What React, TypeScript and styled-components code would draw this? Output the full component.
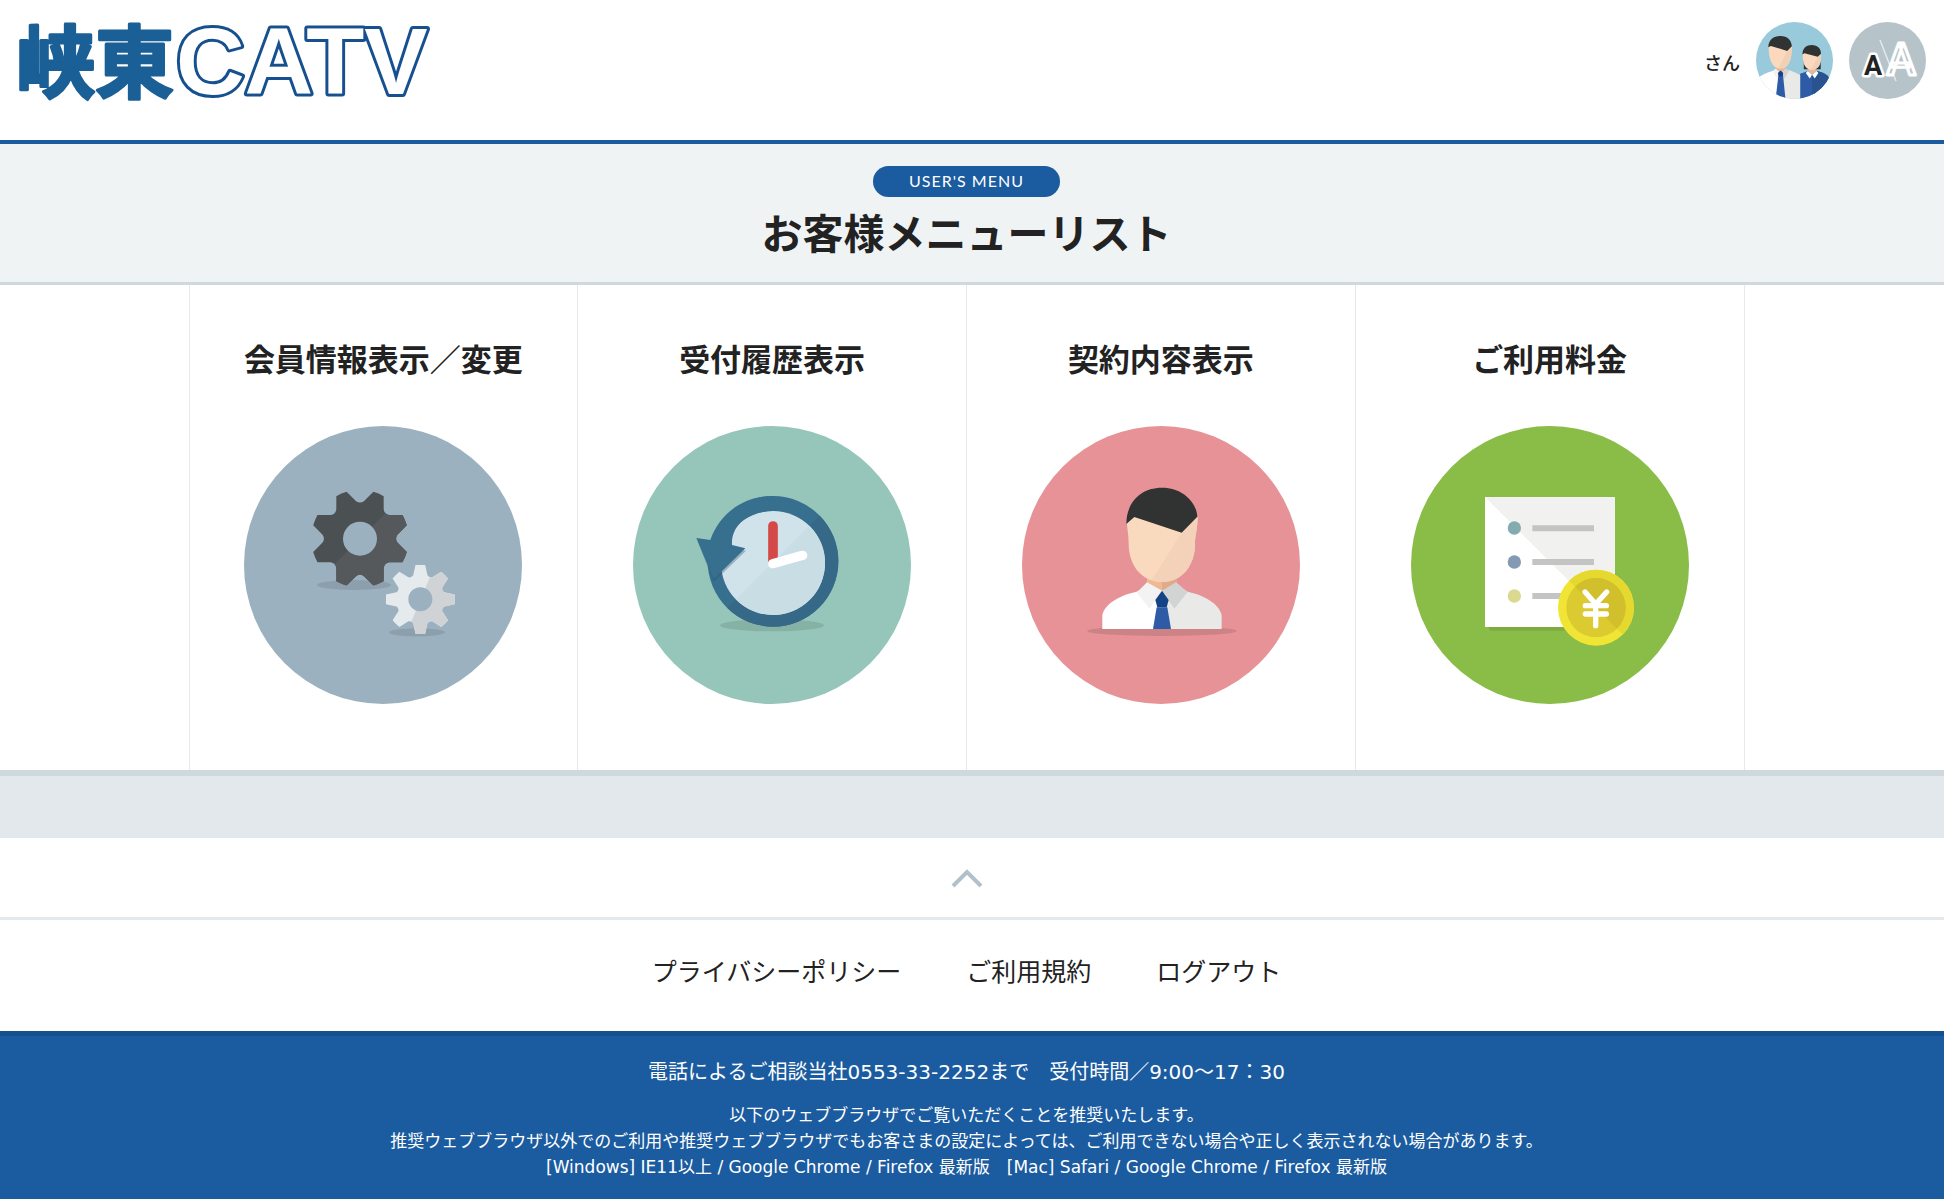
import React from "react";
import styled, { createGlobalStyle } from "styled-components";

const BLUE = "#1b5b9f";

const GlobalStyle = createGlobalStyle`
  *, *::before, *::after { box-sizing: border-box; }
  body {
    margin: 0;
    background: #fff;
    color: #222;
    font-family: "DejaVu Sans", "Noto Sans CJK JP", sans-serif;
  }
  h1, h2, p { margin: 0; }
  a { color: inherit; text-decoration: none; }
`;

const Header = styled.header`
  display: flex;
  justify-content: space-between;
  align-items: flex-start;
  height: 144px;
  padding: 0 18px 0 14px;
  border-bottom: 4px solid ${BLUE};
`;

const HomeLink = styled.a`
  display: block;
  line-height: 0;
`;

const HeaderTools = styled.div`
  display: flex;
  align-items: center;
  gap: 16px;
  padding-top: 22px;
`;

const UserName = styled.span`
  padding-top: 2px;
  font-size: 18px;
  line-height: 24px;
  font-weight: 500;
  font-family: "Noto Sans CJK JP", sans-serif;
`;

const RoundButton = styled.button`
  width: 77px;
  height: 77px;
  padding: 0;
  border: 0;
  border-radius: 50%;
  background: none;
  cursor: pointer;

  svg { display: block; width: 100%; height: 100%; }
`;

const Hero = styled.section`
  display: flex;
  flex-direction: column;
  align-items: center;
  gap: 10px;
  padding: 22px 11px 26px 0;
  background: #eff3f4;
  border-bottom: 3px solid #cfd8dd;
`;

const Pill = styled.p`
  padding: 0 36px 2px;
  border-radius: 16px;
  background: ${BLUE};
  color: #fff;
  font-family: Lato, sans-serif;
  font-size: 16px;
  line-height: 29px;
  letter-spacing: 1px;
`;

const Title = styled.h1`
  font-family: "Noto Sans CJK JP", sans-serif;
  font-size: 41px;
  line-height: 49px;
  font-weight: 700;
`;

const MenuSection = styled.main`
  padding-right: 11px;
  border-bottom: 6px solid #cfd8dd;
`;

const MenuGrid = styled.nav`
  display: grid;
  grid-template-columns: repeat(4, 1fr);
  max-width: 1556px;
  margin: 0 auto;
  border-right: 1px solid #e3e9ed;
`;

const MenuCard = styled.a`
  display: flex;
  flex-direction: column;
  align-items: center;
  gap: 44px;
  padding: 49px 20px 66px;
  border-left: 1px solid #e3e9ed;

  svg { display: block; width: 278px; height: 278px; }
`;

const CardTitle = styled.h2`
  font-family: "Noto Sans CJK JP", sans-serif;
  font-size: 31px;
  line-height: 48px;
  font-weight: 700;
  white-space: nowrap;
`;

const Band = styled.div`
  height: 62px;
  background: #e3e8ec;
`;

const PageTop = styled.a`
  display: flex;
  justify-content: center;
  align-items: center;
  height: 82px;
  padding-right: 11px;
  border-bottom: 3px solid #e3e9ed;
`;

const FooterNav = styled.nav`
  display: flex;
  justify-content: center;
  gap: 65px;
  padding: 32px 11px 38px 0;
  font-size: 25px;
  line-height: 41px;
`;

const Footer = styled.footer`
  display: flex;
  flex-direction: column;
  gap: 17px;
  padding: 23px 11px 19px 0;
  border-top: 5px solid #16518f;
  background: ${BLUE};
  color: #fff;
  text-align: center;
`;

const Phone = styled.p`
  font-size: 20px;
  line-height: 26px;
`;

const Browsers = styled.p`
  font-size: 17px;
  line-height: 26px;
`;

const LogoLatin = styled.text`
  font-family: "Liberation Sans", sans-serif;
  font-size: 95px;
  font-weight: 700;
  fill: #fff;
  stroke: #17508f;
  stroke-width: 6px;
  stroke-linejoin: round;
  paint-order: stroke;
`;

const LogoKanji = styled.text`
  font-family: "Noto Sans CJK JP", sans-serif;
  font-size: 79px;
  font-weight: 700;
  fill: #1a6097;
  stroke: #1a6097;
  stroke-width: 3px;
  stroke-linejoin: round;
`;

const Logo = () => (
  <svg width="430" height="130" viewBox="0 0 430 130" role="img" aria-label="峡東CATV">
    <LogoKanji x="2" y="92">峡東</LogoKanji>
    <LogoLatin x="162" y="94">CATV</LogoLatin>
  </svg>
);

const AvatarIcon = () => (
  <svg viewBox="228 66 232 232" aria-hidden="true">
    <clipPath id="avatarClip"><circle cx="344" cy="182" r="116" /></clipPath>
    <g clipPath="url(#avatarClip)">
      <rect x="228" y="66" width="232" height="232" fill="#98cadb" />
      <path d="M372 172v36h16v-36zM406 172v36h17v-36z" fill="#303332" />
      <path d="M386 200h22v20h-22z" fill="#ebb78f" />
      <path d="M361 222Q372 219 384 214L397 226L412 214Q440 220 448 234V300H361z" fill="#2d5ba5" />
      <path d="M397 226L412 214Q440 220 448 234V300H397z" fill="#29528f" />
      <path d="M384 214L397 225L390 236L378 220zM411 214L397 225L405 236L416 220z" fill="#fff" />
      <path d="M369 158C368 190 374 210 396 210C420 210 425 190 424 158z" fill="#fad9be" />
      <path d="M424 160C425 190 420 210 394 209L414 172z" fill="#f2d0b5" />
      <path d="M368 164C368 144 380 135 396 135C414 135 424 146 424 162L414 171L374 160z" fill="#303332" />
      <path d="M289 196h27v20h-27z" fill="#ebb78f" />
      <path d="M228 240Q245 222 280 213L302 222V300H228z" fill="#fff" />
      <path d="M302 222L318 208Q345 216 361 226V300H302z" fill="#e9e9e8" />
      <path d="M288 206L302 222L291 238L278 214z" fill="#f3f3f3" />
      <path d="M316 206L302 222L313 238L328 214z" fill="#d2d3d2" />
      <path d="M302 213L309 222L317 300H287L296 222z" fill="#2d5ba5" />
      <path d="M302 212L310 220L307 230H297L294 220z" fill="#134285" />
      <path d="M266 138C266 178 276 206 302 206C328 206 336 178 336 138z" fill="#fad9be" />
      <path d="M336 140C336 178 328 206 296 205L322 152z" fill="#f2d0b5" />
      <path d="M265 142C266 118 282 108 302 108C322 108 335 120 336 139L322 153L273 138z" fill="#303332" />
    </g>
  </svg>
);

const SizeLetter = styled.text<{ $large?: boolean }>`
  font-family: Roboto, sans-serif;
  font-size: ${(p) => (p.$large ? 44 : 27)}px;
  font-weight: ${(p) => (p.$large ? 500 : 700)};
  fill: ${(p) => (p.$large ? "#b6c4ca" : "#222")};
  stroke: #fff;
  stroke-width: ${(p) => (p.$large ? 3 : 5)}px;
  stroke-linejoin: round;
  paint-order: ${(p) => (p.$large ? "normal" : "stroke")};
  text-anchor: middle;
`;

const FontSizeIcon = () => (
  <svg viewBox="0 0 77 77" aria-hidden="true">
    <circle cx="38.5" cy="38.5" r="38.5" fill="#b6c4ca" />
    <path d="M31 18L47 59" stroke="#e4e9eb" strokeWidth="1.5" />
    <SizeLetter $large x="52" y="53">A</SizeLetter>
    <SizeLetter x="24" y="53">A</SizeLetter>
  </svg>
);

/* Outline of an eight-toothed gear; `start` is the angle of the first tooth. */
const gearPath = (
  cx: number, cy: number, tipR: number, rootR: number,
  tipHalf: number, rootHalf: number, start: number
) => {
  const at = (r: number, deg: number) => {
    const a = (deg * Math.PI) / 180;
    return `${(cx + r * Math.cos(a)).toFixed(1)} ${(cy + r * Math.sin(a)).toFixed(1)}`;
  };
  let d = "";
  for (let i = 0; i < 8; i += 1) {
    const tooth = start + i * 45;
    d += `${i === 0 ? "M" : "L"}${at(tipR, tooth - tipHalf)}`;
    d += `Q${at(tipR * 1.005, tooth)} ${at(tipR, tooth + tipHalf)}`;
    d += `L${at(rootR, tooth + 22.5 - rootHalf)}`;
    d += `Q${at(rootR * 0.92, tooth + 22.5)} ${at(rootR, tooth + 22.5 + rootHalf)}`;
  }
  return `${d}Z`;
};

const GearsIcon = () => (
  <svg viewBox="222 318 834 834" aria-hidden="true">
    <clipPath id="bigGear"><path d={gearPath(570, 656, 146, 113, 6.6, 6, 22.5)} /></clipPath>
    <clipPath id="smallGear"><path d={gearPath(751, 838, 104, 75, 8, 6, 0)} /></clipPath>
    <circle cx="639" cy="735" r="417" fill="#9bb1bf" />
    <ellipse cx="552" cy="795" rx="111" ry="15" fill="#8c9fac" />
    <ellipse cx="741" cy="937" rx="84" ry="12" fill="#8c9fac" />
    <g clipPath="url(#bigGear)">
      <rect x="400" y="500" width="340" height="310" fill="#4b5052" />
      <path d="M410 816L740 486V816z" fill="#55595c" />
    </g>
    <circle cx="570" cy="656" r="51" fill="#9bb1bf" />
    <g clipPath="url(#smallGear)">
      <rect x="640" y="720" width="230" height="230" fill="#e5eaed" />
      <path d="M801 720L703 956H880V720z" fill="#cfd3d6" />
    </g>
    <circle cx="751" cy="838" r="36" fill="#9bb1bf" />
  </svg>
);

const HistoryIcon = () => (
  <svg viewBox="218 318 834 834" aria-hidden="true">
    <clipPath id="clockRing"><circle cx="638" cy="724" r="196" /></clipPath>
    <clipPath id="clockFace"><circle cx="638" cy="729" r="156" /></clipPath>
    <circle cx="635" cy="735" r="417" fill="#95c6b9" />
    <ellipse cx="635" cy="916" rx="156" ry="18" fill="#86b2a6" />
    <circle cx="638" cy="724" r="196" fill="#376f8e" />
    <path d="M440 925L840 525V925z" fill="#366987" clipPath="url(#clockRing)" />
    <circle cx="638" cy="729" r="156" fill="#d1e3ea" />
    <path d="M440 925L840 525V925z" fill="#c9dde5" clipPath="url(#clockFace)" />
    <path d="M412 664L460 786L557 692z" fill="#2f5468" opacity="0.35" />
    <path
      d="M408 654L450 660C478 580 550 528 638 528V573C560 573 512 618 515 675L555 685L460 778z"
      fill="#376f8e"
    />
    <path d="M638 618V728" stroke="#d44848" strokeWidth="29" strokeLinecap="round" />
    <path d="M637 731L727 706" stroke="#fff" strokeWidth="28" strokeLinecap="round" />
  </svg>
);

const PersonIcon = () => (
  <svg viewBox="183 318 834 834" aria-hidden="true">
    <circle cx="600" cy="735" r="417" fill="#e79297" />
    <ellipse cx="603" cy="933" rx="224" ry="15" fill="#cd8286" />
    <path d="M558 770H603V814L558 790z" fill="#efba93" />
    <path d="M603 770H648V790L603 814z" fill="#dfac87" />
    <path d="M424 927V885C432 850 480 824 527 815L560 795L603 812V927z" fill="#fff" />
    <path d="M782 927V885C774 850 726 824 680 815L645 795L603 812V927z" fill="#e9e9e8" />
    <path d="M558 787L603 812L566 866L527 818z" fill="#f3f3f3" />
    <path d="M645 787L603 812L640 866L680 816z" fill="#d2d4d4" />
    <path d="M587 862H619L630 927H576z" fill="#2f5ba6" />
    <path d="M603 812L623 840L617 862H589L583 840z" fill="#134285" />
    <path d="M497 600C500 640 503 645 503 672C503 735 542 786 603 786C664 786 702 735 702 672C702 645 708 640 710 590L603 560z" fill="#fadabf" />
    <path d="M710 590C708 640 702 645 702 672C702 735 664 786 603 786Q586 786 572 780L662 638z" fill="#f3d2b9" />
    <path d="M496 612C496 550 536 503 603 503C664 503 706 545 709 590L662 638L520 591z" fill="#303332" />
  </svg>
);

const BillIcon = () => (
  <svg viewBox="213 318 834 834" aria-hidden="true">
    <clipPath id="coin"><circle cx="768" cy="863" r="114" /></clipPath>
    <circle cx="630" cy="735" r="417" fill="#8abc48" />
    <path d="M443 915H700V932H450z" fill="#7dab42" />
    <rect x="435" y="531" width="390" height="390" fill="#fff" />
    <path d="M435 531H825V921z" fill="#f1f1f0" />
    <circle cx="523" cy="624" r="20" fill="#84abb0" />
    <circle cx="523" cy="726" r="20" fill="#8399b4" />
    <circle cx="523" cy="828" r="20" fill="#dbd88f" />
    <path d="M577 625H762M577 726H762M577 828H700" stroke="#c4c4c4" strokeWidth="18" />
    <circle cx="768" cy="863" r="114" fill="#f0e534" />
    <path d="M640 735H900V995z" fill="#e5d82e" clipPath="url(#coin)" />
    <circle cx="768" cy="863" r="89" fill="#dccb30" />
    <path d="M705 800A89 89 0 0 1 831 926z" fill="#d1c02b" />
    <path
      d="M735 816L767 852L800 816M767 852V917M736 857H799M736 882H799"
      fill="none" stroke="#fff" strokeWidth="16" strokeLinecap="round" strokeLinejoin="round"
    />
  </svg>
);

const menu = [
  { title: "会員情報表示／変更", Icon: GearsIcon },
  { title: "受付履歴表示", Icon: HistoryIcon },
  { title: "契約内容表示", Icon: PersonIcon },
  { title: "ご利用料金", Icon: BillIcon },
];

const footerLinks = ["プライバシーポリシー", "ご利用規約", "ログアウト"];

export default function App() {
  return (
    <>
      <GlobalStyle />
      <Header id="top">
        <HomeLink href="#"><Logo /></HomeLink>
        <HeaderTools>
          <UserName>さん</UserName>
          <RoundButton type="button" aria-label="お客様"><AvatarIcon /></RoundButton>
          <RoundButton type="button" aria-label="文字サイズ"><FontSizeIcon /></RoundButton>
        </HeaderTools>
      </Header>
      <Hero>
        <Pill>USER'S MENU</Pill>
        <Title>お客様メニューリスト</Title>
      </Hero>
      <MenuSection>
        <MenuGrid>
          {menu.map(({ title, Icon }) => (
            <MenuCard href="#" key={title}>
              <CardTitle>{title}</CardTitle>
              <Icon />
            </MenuCard>
          ))}
        </MenuGrid>
      </MenuSection>
      <Band />
      <PageTop href="#top" aria-label="ページの先頭へ">
        <svg width="32" height="20" viewBox="0 0 32 20" aria-hidden="true">
          <path d="M2 18L16 4L30 18" fill="none" stroke="#b0c1cb" strokeWidth="4" />
        </svg>
      </PageTop>
      <FooterNav>
        {footerLinks.map((label) => (
          <a href="#" key={label}>{label}</a>
        ))}
      </FooterNav>
      <Footer>
        <Phone>電話によるご相談当社0553-33-2252まで　受付時間／9:00～17：30</Phone>
        <Browsers>
          以下のウェブブラウザでご覧いただくことを推奨いたします。<br />
          推奨ウェブブラウザ以外でのご利用や推奨ウェブブラウザでもお客さまの設定によっては、ご利用できない場合や正しく表示されない場合があります。<br />
          [Windows] IE11以上 / Google Chrome / Firefox 最新版　[Mac] Safari / Google Chrome / Firefox 最新版
        </Browsers>
      </Footer>
    </>
  );
}
